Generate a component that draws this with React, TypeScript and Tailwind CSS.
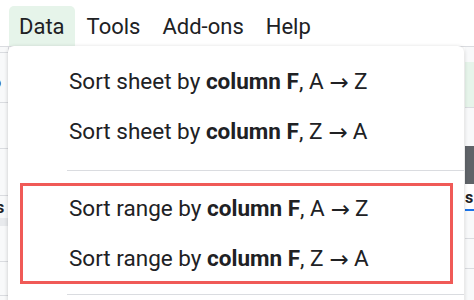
import React from "react";

const font = { fontFamily: "Roboto, 'Liberation Sans', sans-serif" };

function Item({ pre, bold, a, b }: { pre: string; bold: string; a: string; b: string }) {
  return (
    <div className="h-[50px] flex items-center pl-[61px] text-[22.5px] text-[#202124] whitespace-nowrap">
      <span>{pre}</span>
      <span className="font-bold">&nbsp;{bold}</span>
      <span>,&nbsp;{a}</span>
      <span className="text-[23px] font-['DejaVu_Sans',sans-serif] ml-[6px] mr-[5px]">→</span>
      <span>{b}</span>
    </div>
  );
}

export default function App() {
  return (
    <div className="w-[474px] h-[300px] relative overflow-hidden bg-white" style={font}>
      {/* Menu bar */}
      <div className="flex items-end h-[46px] pl-[9px] gap-[2px] text-[22px] text-[#202124]">
        <div className="h-[40px] px-[10px] flex items-center bg-[#e6f4ea] rounded-t-[5px]">Data</div>
        <div className="h-[40px] px-[10px] flex items-center">Tools</div>
        <div className="h-[40px] px-[10px] flex items-center">Add-ons</div>
        <div className="h-[40px] px-[10px] flex items-center">Help</div>
      </div>

      {/* Spreadsheet behind the menu */}
      <div className="flex justify-between border-t border-[#dadce0] h-[254px]">
        <div className="w-[9px] flex flex-col border-r border-[#dadce0] bg-[#f8f9fa]">
          <div className="h-[6px] border-b border-[#dadce0]" />
          <div className="h-[50px] border-b border-[#dadce0] relative overflow-hidden">
            <span className="absolute left-[-8px] top-[18px] text-[16px] font-bold text-[#202124]">o</span>
          </div>
          <div className="h-[46px] border-b border-[#dadce0]" />
          <div className="h-[47px] border-b border-[#dadce0]" />
          <div className="h-[30px] border-b-[8px] border-[#e8eaed] relative overflow-hidden">
            <span className="absolute left-[-4px] top-[0px] text-[16px] font-bold text-[#202124]">s</span>
          </div>
          <div className="h-[36px] border-b border-[#dadce0]" />
          <div className="h-[34px] border-b border-[#dadce0]" />
        </div>
        <div className="w-[9px] flex flex-col bg-[#f8f9fa]">
          <div className="h-[15px]" />
          <div className="h-[46px] bg-[#e6f4ea] border-b border-[#dadce0]" />
          <div className="h-[38px]" />
          <div className="h-[38px] bg-[#5f6368]" />
          <div className="h-[27px] border-b-2 border-[#1a73e8] relative overflow-hidden bg-white">
            <span className="absolute left-[0px] top-[2px] text-[16px] font-bold text-[#202124]">s</span>
          </div>
          <div className="h-[28px] border-b border-[#dadce0]" />
          <div className="h-[30px] border-b border-[#dadce0]" />
        </div>
      </div>

      {/* Dropdown menu */}
      <div className="absolute left-[8px] top-[46px] w-[456px] h-[280px] bg-white rounded-[6px] shadow-[0_1px_4px_rgba(0,0,0,0.2)]">
        <div className="pt-[11px]">
          <Item pre="Sort sheet by" bold="column F" a="A" b="Z" />
          <Item pre="Sort sheet by" bold="column F" a="Z" b="A" />
        </div>
        <div className="mt-[13px] ml-[59px] border-t border-[#dadce0]" />
        <div className="relative pt-[13px]">
          <Item pre="Sort range by" bold="column F" a="A" b="Z" />
          <Item pre="Sort range by" bold="column F" a="Z" b="A" />
          <div className="absolute left-[12px] top-[12px] w-[433px] h-[101px] border-[3px] border-[#f05a57]" />
        </div>
        <div className="mt-[10px] ml-[59px] border-t border-[#dadce0]" />
      </div>
    </div>
  );
}
